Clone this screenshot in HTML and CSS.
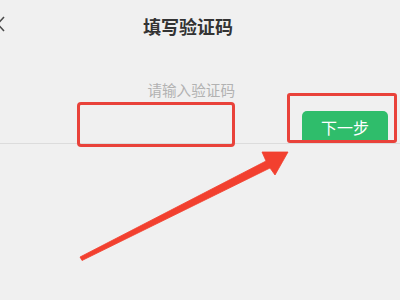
FILE: index.html
```html
<!DOCTYPE html>
<html lang="zh">
<head>
<meta charset="utf-8">
<link rel="stylesheet" href="styles.css">
</head>
<body>
<div class="page">
  <div class="header">
    <svg class="close" width="14" height="18" viewBox="0 0 14 18"><path d="M0 2 L13 16 M13 2 L0 16" stroke="#4a4a4a" stroke-width="1.6" fill="none"/></svg>
    <div class="title">填写验证码</div>
  </div>
  <div class="row">
    <div class="left">
      <div class="hint">请输入验证码</div>
      <div class="input-box"></div>
    </div>
    <div class="right">
      <div class="btn-box">
        <div class="btn">下一步</div>
      </div>
    </div>
  </div>
  <svg class="arrow" width="400" height="300" viewBox="0 0 400 300">
    <polygon points="80,257 266,161 262,152 288,152 275,175 270,168 82,260.5" fill="#f2402f" stroke="#f2402f" stroke-width="0.8" stroke-linejoin="round"/>
  </svg>
</div>
</body>
</html>
```

FILE: styles.css
```css
html, body {
  margin: 0;
  padding: 0;
}
body {
  background: #f0f0f0;
}
.page {
  position: relative;
  width: 400px;
  height: 300px;
  overflow: hidden;
  background: #f0f0f0;
  font-family: "Noto Sans CJK SC", "Noto Sans", sans-serif;
}
.header {
  height: 52px;
  display: flex;
  align-items: center;
}
.close {
  flex: none;
  margin-left: -9px;
  margin-top: -4px;
}
.title {
  margin-left: 138px;
  font-size: 18px;
  line-height: 20px;
  font-weight: bold;
  color: #333333;
  letter-spacing: 0;
}
.row {
  margin-top: 28px;
  display: flex;
  align-items: flex-start;
  background: linear-gradient(#dcdcdc, #dcdcdc) no-repeat 0 63px / 100% 1px;
  height: 70px;
}
.left {
  margin-left: 77px;
  width: 158px;
}
.hint {
  text-align: right;
  font-size: 14.6px;
  line-height: 20px;
  color: #b2b2b2;
}
.input-box {
  margin-top: 2px;
  height: 45px;
  box-sizing: border-box;
  border: 3.5px solid #e9423a;
  border-radius: 4px;
}
.right {
  margin-left: 52px;
  margin-top: 13px;
}
.btn-box {
  width: 110px;
  height: 50px;
  box-sizing: border-box;
  border: 3px solid #e9423a;
  border-radius: 3px;
  overflow: hidden;
  padding: 15px 0 0 12px;
}
.btn {
  width: 86px;
  height: 33px;
  border-radius: 5px;
  background: #2fbd6b;
  color: #ffffff;
  font-size: 16px;
  line-height: 33px;
  text-align: center;
}
.arrow {
  position: absolute;
  left: 0;
  top: 0;
  pointer-events: none;
}
```
